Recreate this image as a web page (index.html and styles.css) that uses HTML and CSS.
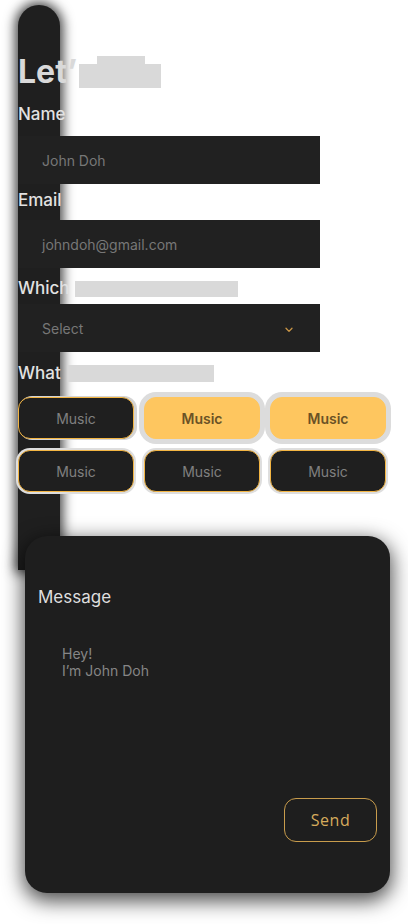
FILE: index.html
```html
<!DOCTYPE html>
<html lang="en">
<head>
<meta charset="utf-8">
<title>Let's Talk</title>
<link rel="stylesheet" href="styles.css">
</head>
<body>
<div class="page">
  <div class="form">
    <h1 class="title"><span class="title-text">Let’</span><span class="mask-group" aria-hidden="true"><span class="m m1"></span><span class="m m2"></span><span class="m m3"></span></span></h1>

    <label class="label label-name">Name</label>
    <div class="field">John Doh</div>

    <label class="label label-email">Email</label>
    <div class="field">johndoh@gmail.com</div>

    <label class="label label-which">Which<span class="mask mask-which" aria-hidden="true"></span></label>
    <div class="field select">
      <span>Select</span>
      <svg class="chev" width="8" height="6" viewBox="0 0 8 6"><path d="M1 1.2 L4 4.4 L7 1.2" fill="none" stroke="#c99546" stroke-width="1.3" stroke-linecap="round" stroke-linejoin="round"/></svg>
    </div>

    <label class="label label-what">What<span class="mask mask-what" aria-hidden="true"></span></label>
    <div class="chips">
      <div class="chip">Music</div>
      <div class="chip chip-on">Music</div>
      <div class="chip chip-on">Music</div>
      <div class="chip">Music</div>
      <div class="chip">Music</div>
      <div class="chip">Music</div>
    </div>
  </div>

  <div class="card">
    <div class="card-label">Message</div>
    <div class="message">Hey!<br>I’m John Doh</div>
    <div class="card-footer">
      <button class="send">Send</button>
    </div>
  </div>
</div>
</body>
</html>
```

FILE: styles.css
```css
* { box-sizing: border-box; }

html, body {
  margin: 0;
  padding: 0;
  background: #ffffff;
}

body {
  font-family: "Inter", "Noto Sans", sans-serif;
  width: 408px;
  height: 924px;
  overflow: hidden;
}

.page {
  position: relative;
  padding: 54px 0 0 18px;
}

.page::before {
  content: "";
  position: absolute;
  left: 18px;
  top: 5px;
  width: 42px;
  height: 565px;
  background: #1f1f1f;
  border-radius: 21px 21px 0 0;
  box-shadow: 0 0 12px 3px rgba(0, 0, 0, 0.75);
  z-index: 0;
}

.form {
  position: relative;
  z-index: 1;
  display: flex;
  flex-direction: column;
  align-items: flex-start;
}

.title {
  margin: 0;
  display: flex;
  align-items: flex-start;
  font-size: 32px;
  line-height: 36px;
  font-weight: 700;
  color: #d9d9d9;
}

.mask-group {
  display: flex;
  align-items: flex-end;
  height: 32px;
  margin-top: 2px;
  margin-left: 2px;
}

.m { display: block; background: #d9d9d9; }
.m1 { width: 18px; height: 24px; }
.m2 { width: 48px; height: 32px; }
.m3 { width: 16px; height: 24px; }

.label {
  display: flex;
  align-items: center;
  font-size: 17px;
  line-height: 21px;
  font-weight: 500;
  color: #e2e2e2;
}

.label-name { margin-top: 14px; }
.label-email { margin-top: 6px; }
.label-which { margin-top: 10px; }
.label-what { margin-top: 11px; }

.mask {
  display: inline-block;
  background: #d9d9d9;
}

.mask-which {
  width: 163px;
  height: 16px;
  margin-left: 5px;
}

.mask-what {
  width: 146px;
  height: 17px;
  margin-left: 7px;
}

.field {
  width: 302px;
  height: 48px;
  display: flex;
  align-items: center;
  padding: 0 24px;
  background: #212121;
  font-size: 14px;
  line-height: 17px;
  color: #777777;
}

.label-name + .field { margin-top: 11px; }
.label-email + .field { margin-top: 9px; }
.label-which + .field { margin-top: 5px; }

.select {
  justify-content: space-between;
  padding-right: 27px;
}

.chev { display: block; margin-top: 4px; }

.chips {
  margin-top: 13px;
  display: grid;
  grid-template-columns: repeat(3, 116px);
  grid-auto-rows: 42px;
  column-gap: 10px;
  row-gap: 11px;
}

.chip {
  display: flex;
  align-items: center;
  justify-content: center;
  background: #1f1f1f;
  border: 1.5px solid #f3b543;
  border-radius: 12px;
  font-size: 14px;
  color: #808080;
  box-shadow: 0 0 0 2px #dedede;
}

.chip:first-child { box-shadow: 2px 0 0 1px #d4d4d4; }

.chip-on {
  background: #fec65f;
  border-color: #fec65f;
  color: #6b5226;
  font-weight: 600;
  box-shadow: 0 0 0 5px #dcdcdc;
}

.card {
  position: relative;
  z-index: 1;
  margin: 44px 0 0 7px;
  width: 365px;
  height: 357px;
  background: #1e1e1e;
  border-radius: 22px;
  box-shadow: 0 6px 20px 2px rgba(0, 0, 0, 0.7);
  padding: 51px 13px 51px 13px;
  display: flex;
  flex-direction: column;
}

.card-label {
  font-size: 17px;
  line-height: 21px;
  font-weight: 400;
  color: #dedede;
}

.message {
  margin-top: 37px;
  padding-left: 24px;
  font-size: 14px;
  line-height: 17px;
  color: #868686;
}

.card-footer {
  margin-top: auto;
  display: flex;
  justify-content: flex-end;
}

.send {
  width: 93px;
  height: 44px;
  background: transparent;
  border: 1.5px solid #c89c4c;
  border-radius: 12px;
  font-family: "Open Sans", "Noto Sans", sans-serif;
  font-size: 16px;
  letter-spacing: 0.5px;
  color: #d6ab5c;
  padding: 0;
}
```
